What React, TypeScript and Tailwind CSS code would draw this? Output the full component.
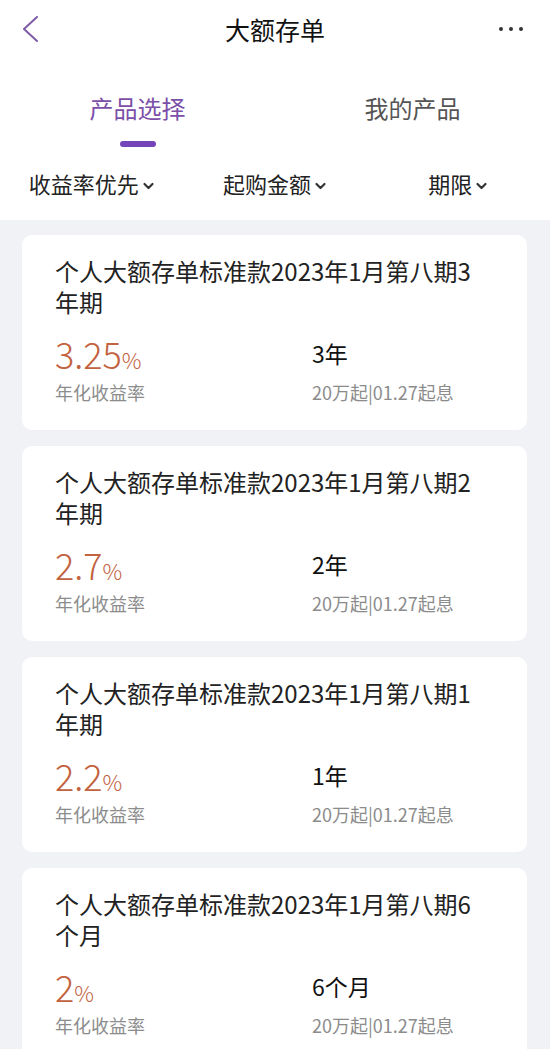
import React from "react";

type Product = {
  title: string;
  rate: string;
  term: string;
};

const products: Product[] = [
  { title: "个人大额存单标准款2023年1月第八期3年期", rate: "3.25", term: "3年" },
  { title: "个人大额存单标准款2023年1月第八期2年期", rate: "2.7", term: "2年" },
  { title: "个人大额存单标准款2023年1月第八期1年期", rate: "2.2", term: "1年" },
  { title: "个人大额存单标准款2023年1月第八期6个月", rate: "2", term: "6个月" },
];

const Chevron = () => (
  <svg width="13" height="10" viewBox="0 0 13 10" className="ml-[3px] mt-[5px]">
    <polyline points="2.5,3 6.5,7 10.5,3" fill="none" stroke="#333" strokeWidth="2.2" strokeLinecap="round" strokeLinejoin="round" />
  </svg>
);

const Card = ({ p }: { p: Product }) => {
  return (
    <div className="h-[195px] shrink-0 rounded-[10px] bg-white pl-[33px] pt-[20px]">
      <p className="w-[430px] text-[24px] leading-[31px] text-[#222]">{p.title}</p>
      <div className="mt-[16px] flex">
        <div className="w-[257px]">
          <div className="h-[40px] text-[36px] font-light leading-[40px] text-[#c2623e]">
            {p.rate}
            <span className="text-[22px]">%</span>
          </div>
          <div className="mt-[7px] text-[18px] leading-[24px] text-[#8c8c8c]">年化收益率</div>
        </div>
        <div>
          <div className="h-[40px] text-[23px] leading-[40px] text-[#111]">{p.term}</div>
          <div className="mt-[7px] text-[18px] leading-[24px] text-[#8c8c8c]">20万起|01.27起息</div>
        </div>
      </div>
    </div>
  );
};

export default function App() {
  return (
    <div
      className="min-h-screen w-[550px] bg-[#f1f2f6]"
      style={{ fontFamily: '"Noto Sans CJK SC", "Noto Sans", sans-serif' }}
    >
      <div className="bg-white">
        {/* header */}
        <div className="grid h-[58px] grid-cols-3 items-center px-[22px]">
          <svg width="18" height="28" viewBox="0 0 18 28">
            <polyline points="15,2 2,14 15,26" fill="none" stroke="#7d5ba6" strokeWidth="2" strokeLinecap="round" strokeLinejoin="round" />
          </svg>
          <span className="text-center text-[25px] leading-[32px] text-[#111]">大额存单</span>
          <div className="flex justify-end pr-[5px]">
            <div className="flex w-[24px] items-center justify-between">
              <span className="h-[4px] w-[4px] rounded-full bg-[#333]" />
              <span className="h-[4px] w-[4px] rounded-full bg-[#333]" />
              <span className="h-[4px] w-[4px] rounded-full bg-[#333]" />
            </div>
          </div>
        </div>

        {/* tabs */}
        <div className="flex pt-[34px]">
          <div className="flex w-1/2 flex-col items-center">
            <span className="text-[24px] leading-[32px] text-[#7b4fa8]">产品选择</span>
            <span className="mt-[17px] h-[6px] w-[36px] rounded-full bg-[#7445b8]" />
          </div>
          <div className="flex w-1/2 flex-col items-center">
            <span className="text-[24px] leading-[32px] text-[#555]">我的产品</span>
          </div>
        </div>

        {/* filters */}
        <div className="grid grid-cols-3 pb-[22px] pt-[21px]">
          {["收益率优先", "起购金额", "期限"].map((f) => (
            <div key={f} className="flex items-center justify-center">
              <span className="text-[22px] leading-[30px] text-[#222]">{f}</span>
              <Chevron />
            </div>
          ))}
        </div>
      </div>

      <div className="flex flex-col gap-4 pl-[22px] pr-[23px] pt-[15px]">
        {products.map((p) => (
          <Card key={p.rate} p={p} />
        ))}
      </div>
    </div>
  );
}
